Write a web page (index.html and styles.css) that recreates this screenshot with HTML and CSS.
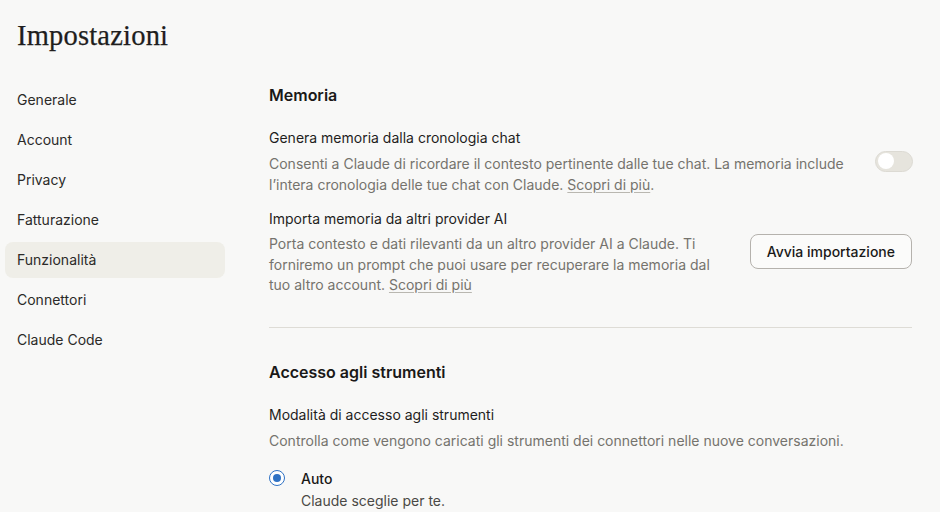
FILE: index.html
```html
<!DOCTYPE html>
<html lang="it">
<head>
<meta charset="utf-8">
<title>Impostazioni</title>
<link rel="stylesheet" href="styles.css">
</head>
<body>
<div class="page">
  <h1 class="title">Impostazioni</h1>
  <div class="layout">
    <nav class="sidebar">
      <a class="nav-item">Generale</a>
      <a class="nav-item">Account</a>
      <a class="nav-item">Privacy</a>
      <a class="nav-item">Fatturazione</a>
      <a class="nav-item active">Funzionalità</a>
      <a class="nav-item">Connettori</a>
      <a class="nav-item">Claude Code</a>
    </nav>
    <main class="main">
      <section class="section">
        <h2 class="section-title">Memoria</h2>
        <div class="row">
          <div class="row-text">
            <div class="row-label">Genera memoria dalla cronologia chat</div>
            <div class="row-desc">Consenti a Claude di ricordare il contesto pertinente dalle tue chat. La memoria include l’intera cronologia delle tue chat con Claude. <a class="link">Scopri di più</a>.</div>
          </div>
          <div class="toggle"><span class="knob"></span></div>
        </div>
        <div class="row row-import">
          <div class="row-text narrow">
            <div class="row-label">Importa memoria da altri provider AI</div>
            <div class="row-desc tight">Porta contesto e dati rilevanti da un altro provider AI a Claude. Ti forniremo un prompt che puoi usare per recuperare la memoria dal tuo altro account. <a class="link">Scopri di più</a></div>
          </div>
          <button class="btn">Avvia importazione</button>
        </div>
      </section>
      <hr class="divider">
      <section class="section">
        <h2 class="section-title">Accesso agli strumenti</h2>
        <div class="row-label">Modalità di accesso agli strumenti</div>
        <div class="row-desc">Controlla come vengono caricati gli strumenti dei connettori nelle nuove conversazioni.</div>
        <div class="radio-option">
          <span class="radio"><span class="radio-dot"></span></span>
          <div class="radio-text">
            <div class="radio-label">Auto</div>
            <div class="radio-desc">Claude sceglie per te.</div>
          </div>
        </div>
      </section>
    </main>
  </div>
</div>
</body>
</html>
```
FILE: styles.css
```css
* { box-sizing: border-box; }
html, body { margin: 0; padding: 0; }
body {
  background: #f8f8f7;
  font-family: Inter, "Noto Sans", sans-serif;
  color: #1f1e1d;
  width: 940px;
  height: 512px;
  overflow: hidden;
}
.title {
  margin: 0;
  padding: 18px 0 0 17px;
  font-family: "Liberation Serif", "DejaVu Serif", serif;
  font-weight: 400;
  font-size: 28.5px;
  line-height: 36px;
  color: #1f1e1d;
  letter-spacing: 0.2px;
  -webkit-text-stroke: 0.25px #1f1e1d;
}
.layout {
  display: flex;
  padding-top: 28px;
}
.sidebar {
  width: 220px;
  margin-left: 5px;
  display: flex;
  flex-direction: column;
  gap: 4px;
  flex-shrink: 0;
}
.nav-item {
  display: block;
  height: 36px;
  line-height: 36px;
  padding-left: 12px;
  border-radius: 8px;
  font-size: 14px;
  color: #2b2a28;
}
.nav-item.active { background: #efeee8; }
.main {
  margin-left: 44px;
  width: 643px;
  padding-top: 1px;
}
.section-title {
  margin: 0 0 20px;
  font-size: 16px;
  font-weight: 600;
  line-height: 24px;
  color: #1a1918;
}
.row {
  display: flex;
  align-items: center;
  gap: 30px;
}
.row-import { margin-top: 13px; }
.row-text { flex: 1; }
.row-import .row-text { flex: 0 1 452px; }
.row-import .btn { margin-left: auto; }
.row-label {
  font-size: 14px;
  line-height: 21px;
  color: #1f1e1d;
}
.row-desc {
  margin-top: 5px;
  font-size: 14px;
  line-height: 21px;
  color: #75736d;
}
.row-desc.tight { line-height: 20.5px; }
.link {
  color: #75736d;
  text-decoration: underline;
  text-decoration-color: #b9b7b0;
  text-underline-offset: 2px;
}
.toggle {
  width: 38px;
  height: 21px;
  border-radius: 11px;
  background: #e6e4dd;
  border: 1px solid #dcdad3;
  position: relative;
  flex-shrink: 0;
  margin-right: -1px;
}
.knob {
  position: absolute;
  left: 2px;
  top: 1.5px;
  width: 16px;
  height: 16px;
  border-radius: 50%;
  background: #ffffff;
}
.btn {
  height: 35px;
  padding: 0 16px;
  border: 1px solid #b5b2ad;
  border-radius: 8px;
  background: #fbfbfa;
  font-family: Inter, "Noto Sans", sans-serif;
  font-size: 14px;
  font-weight: 500;
  color: #1a1918;
  flex-shrink: 0;
}
.divider {
  margin: 31px 0 32px;
  border: 0;
  border-top: 1px solid #dedcd6;
}
.radio-option {
  display: flex;
  gap: 16px;
  margin-top: 17px;
  align-items: flex-start;
}
.radio {
  width: 16px;
  height: 16px;
  margin-top: 2.5px;
  border-radius: 50%;
  border: 1.5px solid #2f72c4;
  background: #fff;
  display: flex;
  align-items: center;
  justify-content: center;
  flex-shrink: 0;
}
.radio-dot {
  width: 8px;
  height: 8px;
  border-radius: 50%;
  background: #2f72c4;
}
.radio-label {
  font-size: 14px;
  font-weight: 500;
  line-height: 21px;
  color: #1a1918;
}
.radio-desc {
  margin-top: 1px;
  font-size: 14px;
  line-height: 21px;
  color: #4a4945;
}
```
